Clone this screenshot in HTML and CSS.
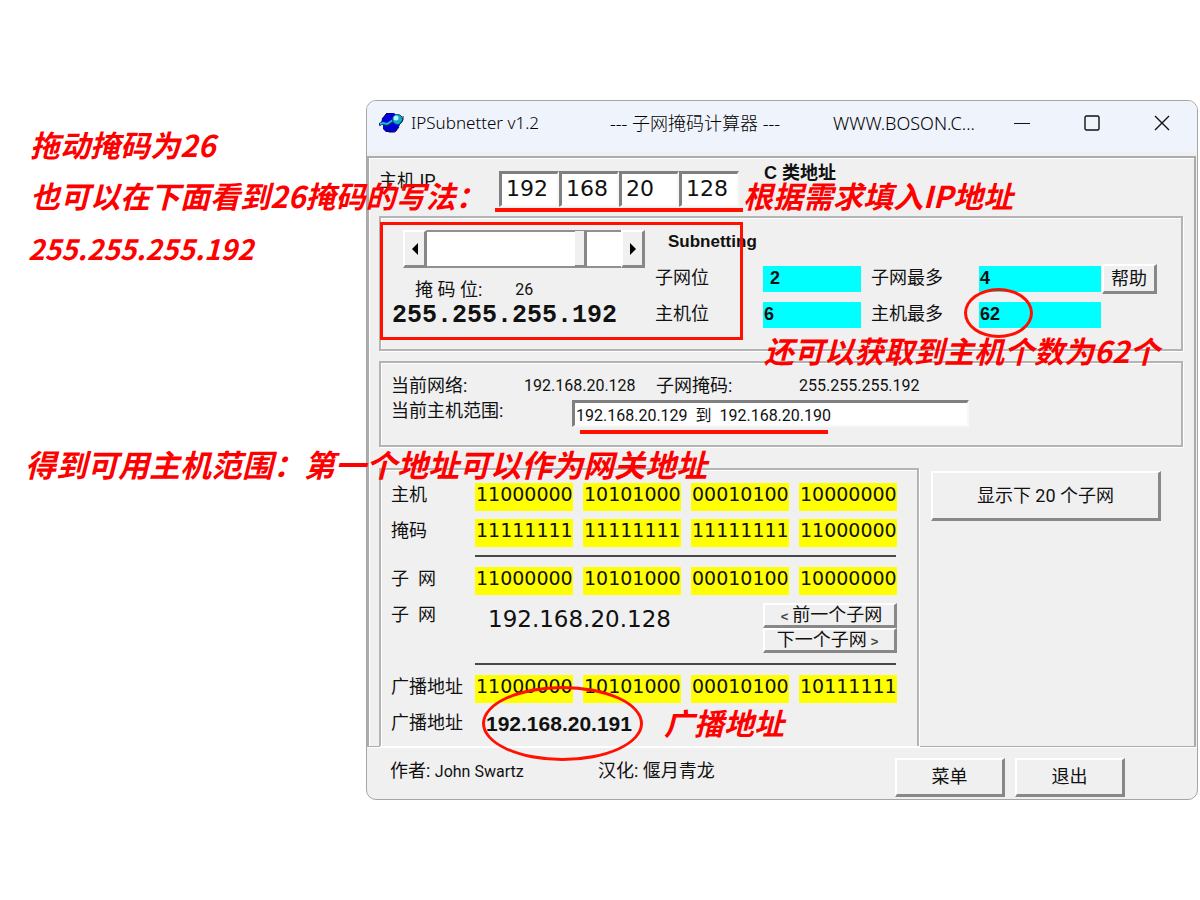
FILE: index.html
```
<!DOCTYPE html>
<html lang="zh-CN">
<head>
<meta charset="utf-8">
<title>IPSubnetter v1.2</title>
<link rel="stylesheet" href="styles.css">
</head>
<body>
<main class="stage">
  <section class="window">
    <header class="titlebar">
      <svg class="app-icon" width="25" height="20" viewBox="0 0 25 20" aria-hidden="true">
        <path d="M8 0H15L20 4L21 12L17 18L14 19H7L4 16V12L2 10L3 6Z" fill="#0000d8"/>
        <path d="M3 6L8 0H12M6 16L10 19H16L20 14" stroke="#000040" fill="none"/>
        <path d="M0 12L3 10L8 12L13 9" stroke="#003060" stroke-width="3" fill="none"/>
        <path d="M1 11L4 10L8 11L14 7" stroke="#20b8e8" stroke-width="2" fill="none"/>
        <circle cx="18.500" cy="6.500" r="5" fill="#18a8c8" stroke="#005070"/>
        <circle cx="17" cy="5" r="2.500" fill="#b8f4ff"/>
        <path d="M21 11L24 7V3" stroke="#002050" fill="none"/>
      </svg>
      <span class="t-name">IPSubnetter v1.2</span>
      <span class="t-desc">--- 子网掩码计算器 ---</span>
      <span class="t-site">WWW.BOSON.C...</span>
      <div class="win-controls">
        <button aria-label="最小化"><svg width="16" height="16" viewBox="0 0 16 16"><path d="M0 8.500H16" stroke="#111"/></svg></button>
        <button aria-label="最大化"><svg width="16" height="16" viewBox="0 0 16 16"><rect x="1" y="1" width="14" height="14" rx="1.500" fill="none" stroke="#111" stroke-width="1.400"/></svg></button>
        <button aria-label="关闭"><svg width="16" height="16" viewBox="0 0 16 16"><path d="M1 1L15 15M15 1L1 15" stroke="#111" stroke-width="1.400"/></svg></button>
      </div>
    </header>

    <div class="content">
      <div class="host-row">
        <span class="host-label">主机 IP</span>
        <div class="octets">
          <input aria-label="IP 1" value="192"><input aria-label="IP 2" value="168"><input aria-label="IP 3" value="20"><input aria-label="IP 4" value="128">
        </div>
        <strong class="class-name">C 类地址</strong>
      </div>

      <section class="group subnetting">
        <div class="mask">
          <div class="scrollbar">
            <button class="raised" aria-label="减少"><svg width="6" height="12" viewBox="0 0 6 12"><path d="M6 0V12L0 6Z"/></svg></button>
            <input type="range" min="0" max="32" value="26" aria-label="掩码位">
            <button class="raised" aria-label="增加"><svg width="6" height="12" viewBox="0 0 6 12"><path d="M0 0V12L6 6Z"/></svg></button>
          </div>
          <div class="mask-bits"><span>掩 码 位:</span><span>26</span></div>
          <div class="mask-value">255.255.255.192</div>
        </div>
        <div class="counts">
          <strong class="heading">Subnetting</strong>
          <span>子网位</span><output class="indent">2</output><span>子网最多</span><output>4</output><button class="raised help">帮助</button>
          <span>主机位</span><output>6</output><span>主机最多</span><output>62</output>
        </div>
      </section>

      <section class="group current">
        <span>当前网络:</span><span>192.168.20.128</span><span>子网掩码:</span><span class="cur-mask">255.255.255.192</span>
        <label for="range">当前主机范围:</label><input id="range" value="192.168.20.129  到  192.168.20.190">
      </section>

      <div class="lower">
        <section class="group binary">
          <div class="bits"><span>主机</span><b>11000000</b><b>10101000</b><b>00010100</b><b>10000000</b></div>
          <div class="bits"><span>掩码</span><b>11111111</b><b>11111111</b><b>11111111</b><b>11000000</b></div>
          <hr>
          <div class="bits"><span>子  网</span><b>11000000</b><b>10101000</b><b>00010100</b><b>10000000</b></div>
          <div class="subnet">
            <span>子  网</span><span class="subnet-ip">192.168.20.128</span>
            <div class="nav"><button class="raised"><i>&lt;</i>前一个子网</button><button class="raised">下一个子网<i>&gt;</i></button></div>
          </div>
          <hr>
          <div class="bits"><span>广播地址</span><b>11000000</b><b>10101000</b><b>00010100</b><b>10111111</b></div>
          <div class="broadcast"><span>广播地址</span><strong>192.168.20.191</strong></div>
        </section>
        <div class="side"><button class="raised">显示下 20 个子网</button></div>
      </div>
    </div>

    <footer class="footer">
      <span class="author">作者: <span class="latin">John Swartz</span></span>
      <span class="translator">汉化: 偃月青龙</span>
      <div class="actions"><button class="raised">菜单</button><button class="raised">退出</button></div>
    </footer>
  </section>

  <div class="box"></div>
  <div class="line line-ip"></div>
  <div class="line line-range"></div>
  <div class="ring ring-hosts"></div>
  <div class="ring ring-broadcast"></div>
  <p class="note n-drag">拖动掩码为26</p>
  <p class="note n-mask">也可以在下面看到26掩码的写法：</p>
  <p class="note n-value">255.255.255.192</p>
  <p class="note n-ip">根据需求填入IP地址</p>
  <p class="note n-hosts">还可以获取到主机个数为62个</p>
  <p class="note wide n-range">得到可用主机范围：第一个地址可以作为网关地址</p>
  <p class="note n-broadcast">广播地址</p>
</main>
</body>
</html>
```
FILE: styles.css
```
* { box-sizing: border-box; }
body {
  margin: 0;
  background: #fff;
  color: #111;
  font: 16px/20px Roboto, "Noto Sans CJK SC", sans-serif;
}
button, input { font: inherit; color: inherit; margin: 0; padding: 0; border-radius: 0; }
span, label, button { white-space: pre; }
.stage { position: relative; padding: 100px 2px 100px 366px; }

.window {
  background: #f0f0f0;
  border: 1px solid #a6a6a6;
  border-radius: 10px;
  overflow: hidden;
  font-size: 18px;
}
.titlebar {
  display: grid;
  grid-template-columns: 32px 199px 223px 1fr auto;
  align-items: center;
  height: 55px;
  padding: 0 20px 8px 12px;
  background: #eff3fb;
  border-bottom: 4px solid #f0f0f0;
  color: #000;
  font: 300 18px/24px "Noto Sans", "Noto Sans CJK SC", sans-serif;
}
.t-name { font-size: 17px; }
.win-controls { display: flex; gap: 40px; }
.win-controls button { width: 30px; height: 24px; background: none; border: 0; }
.win-controls svg { display: block; margin: auto; }

.content {
  margin: 0 1px 0 0;
  padding: 0 11px 0 10px;
  border: 2px solid #acacac;
  border-bottom-width: 1px;
  box-shadow: inset 1px 1px #fff;
}
.host-row { display: flex; height: 58px; }
.host-label { width: 120px; padding-top: 13px; }
.octets { display: flex; width: 265px; padding-top: 13px; }
.octets input {
  width: 60px;
  height: 36px;
  padding: 0 0 3px 4px;
  background: #fff;
  border: 2px solid #f7f7f7;
  border-top: 3px solid #808080;
  border-left: 3px solid #808080;
  font: 22px/26px "DejaVu Sans", sans-serif;
}
.class-name { padding-top: 5px; font-family: "Liberation Sans", "Noto Sans CJK SC", sans-serif; }

.group { border: 2px solid #b4b4b4; box-shadow: inset 1px 1px #fff, 1px 1px #fff; }
.raised {
  background: #f0f0f0;
  border: 2px solid #fff;
  border-right: 3px solid #888;
  border-bottom: 3px solid #888;
}
.subnetting { display: flex; height: 135px; padding: 12px 10px 0 22px; }
.mask { width: 252px; }
.scrollbar { display: flex; width: 242px; height: 38px; }
.scrollbar button { width: 24px; }
.scrollbar svg { display: block; margin: auto; }
.scrollbar input {
  flex: 1;
  min-width: 0;
  height: 38px;
  appearance: none;
  background: #fff;
  border: solid #909090;
  border-width: 2px 0;
}
.scrollbar input::-webkit-slider-thumb {
  appearance: none;
  width: 12px;
  height: 36px;
  background: #f0f0f0;
  border-right: 3px solid #888;
  border-bottom: 2px solid #888;
}
.mask-bits { display: flex; gap: 33px; padding: 10px 0 0 12px; }
.mask-bits span { line-height: 24px; }
.mask-bits span + span { font-size: 16px; }
.mask-value { margin-left: -11px; font: bold 25px/28px "Liberation Mono", monospace; }
.counts {
  display: grid;
  grid-template-columns: 108px 98px 118px 122px 56px;
  grid-template-rows: 26px 26px 26px;
  row-gap: 10px;
}
.counts > span { line-height: 24px; }
.heading { grid-column: 1 / -1; padding-left: 13px; font: bold 17px/24px "Liberation Sans", sans-serif; }
.counts output { background: #0ff; font: bold 18px/24px "Liberation Sans", sans-serif; }
.counts span + output { padding-left: 1px; }
.counts .indent { padding-left: 7px; }
.counts span:nth-of-type(even) { padding-left: 10px; }
.help { height: 30px; margin-left: 1px; margin-top: -2px; }

.current {
  display: grid;
  grid-template-columns: 133px 132px 143px 1fr;
  grid-template-rows: 26px 28px;
  height: 86px;
  margin-top: 10px;
  padding: 11px 10px 0;
}
.current > span { line-height: 24px; }
.current > span:nth-child(even) { font-size: 16px; }
.current label { grid-column: 1; line-height: 22px; }
.current input {
  grid-column: 2 / -1;
  width: 397px;
  height: 27px;
  margin-left: 48px;
  padding-left: 1px;
  background: #fff;
  border: 2px solid #f8f8f8;
  border-top: 3px solid #808080;
  border-left: 3px solid #808080;
  font-size: 16px;
}

.lower { display: flex; margin-top: 21px; }
.binary {
  display: flex;
  flex-direction: column;
  gap: 8px;
  width: 540px;
  padding: 13px 20px 9px 10px;
  border-bottom: 0;
}
.bits { display: grid; grid-template-columns: 74px repeat(4, 98px); gap: 10px; height: 28px; }
.bits span { line-height: 24px; }
.bits b { background: #ff0; font: 19px/23px "DejaVu Sans", sans-serif; padding-left: 1px; }
.binary hr { width: 421px; height: 2px; margin: 0 0 2px 84px; border: 0; background: #48484c; }
.subnet { display: grid; grid-template-columns: 97px 275px 134px; height: 52px; }
.subnet > span { line-height: 24px; }
.subnet .subnet-ip { font: 23px/32px "DejaVu Sans", sans-serif; }
.nav { display: flex; flex-direction: column; }
.nav button { height: 25px; line-height: 20px; }
.nav i { font: bold 13px/18px "Liberation Sans", sans-serif; padding: 0 4px; color: #444; }
.broadcast { display: flex; height: 26px; }
.broadcast span { width: 95px; line-height: 24px; }
.broadcast strong { font: bold 21px/26px "Liberation Sans", sans-serif; }
.side { flex: 1; padding: 3px 22px 0 12px; }
.side button { width: 100%; height: 50px; }

.footer {
  display: flex;
  height: 52px;
  padding: 10px 72px 2px 23px;
  border-top: 1px solid #fff;
}
.footer span { line-height: 26px; }
.author { width: 208px; }
.author .latin { font-size: 16px; }
.actions { display: flex; gap: 10px; margin-left: auto; }
.actions button { width: 110px; height: 39px; }

.note, .box, .line, .ring { position: absolute; pointer-events: none; }
.note {
  margin: 0;
  color: #f00;
  font: italic bold 30px/40px "Noto Sans CJK SC", sans-serif;
  white-space: nowrap;
}
.wide { font-size: 31px; }
.n-drag { left: 30px; top: 124px; }
.n-mask { left: 30px; top: 175px; }
.n-value { left: 28px; top: 228px; font-size: 28px; }
.n-ip { left: 743px; top: 175px; }
.n-hosts { left: 764px; top: 330px; }
.n-range { left: 25px; top: 444px; }
.n-broadcast { left: 664px; top: 702px; }
.box { left: 380px; top: 222px; width: 363px; height: 118px; border: 3px solid #ff1000; }
.line { width: 248px; height: 4px; background: #ff1000; }
.line-ip { left: 495px; top: 208px; }
.line-range { left: 580px; top: 430px; }
.ring { border: 3px solid #ff1000; border-radius: 50%; }
.ring-hosts { left: 964px; top: 288px; width: 69px; height: 50px; }
.ring-broadcast { left: 482px; top: 686px; width: 161px; height: 75px; }
```
